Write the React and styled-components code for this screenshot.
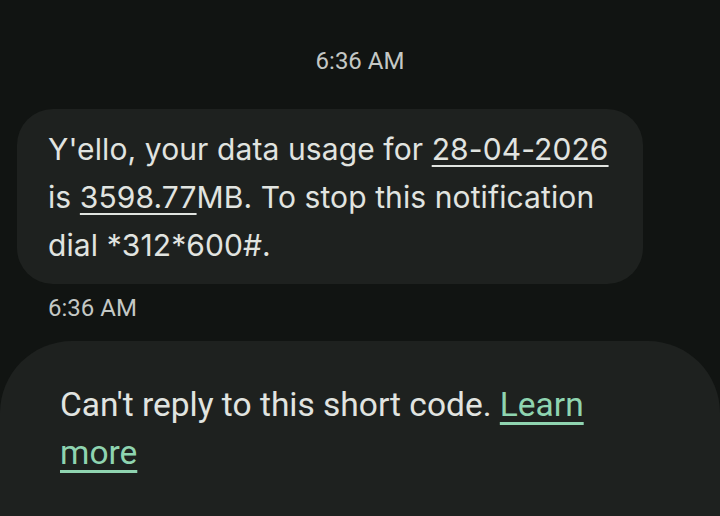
import React from "react";
import styled, { createGlobalStyle } from "styled-components";

const GlobalStyle = createGlobalStyle`
  html, body {
    margin: 0;
    padding: 0;
    background: #111412;
  }
  body {
    width: 720px;
    height: 516px;
    overflow: hidden;
  }
`;

export default function App() {
  return (
    <>
      <GlobalStyle />
      <Screen>
        <Thread>
          <DayStamp>6:36 AM</DayStamp>
          <Bubble>
            Y'ello, your data usage for <Link>28-04-2026</Link> is{" "}
            <Link>3598.77</Link>MB. To stop this notification dial *312*600#.
          </Bubble>
          <MsgTime>6:36 AM</MsgTime>
        </Thread>
        <Footer>
          <FooterText>
            Can't reply to this short code. <LearnMore href="#">Learn more</LearnMore>
          </FooterText>
        </Footer>
      </Screen>
    </>
  );
}

const Screen = styled.div`
  width: 720px;
  height: 516px;
  display: flex;
  flex-direction: column;
  overflow: hidden;
  background: #111412;
`;
const Thread = styled.div`
  display: flex;
  flex-direction: column;
  padding: 45px 17px 0;
`;
const DayStamp = styled.div`
  align-self: center;
  font-family: "Roboto", sans-serif;
  font-size: 24px;
  line-height: 32px;
  color: #c4c8c5;
`;
const Bubble = styled.div`
  margin-top: 32px;
  width: 626px;
  box-sizing: border-box;
  padding: 16px 26px 15px 31px;
  border-radius: 36px;
  background: #1e211f;
  font-family: "Inter", sans-serif;
  font-size: 30px;
  letter-spacing: 0.1px;
  line-height: 48px;
  color: #e1e4e0;
`;
const Link = styled.span`
  text-decoration: underline;
  text-decoration-thickness: 2px;
  text-underline-offset: 5px;
`;
const MsgTime = styled.div`
  margin-top: 8px;
  padding-left: 31px;
  font-family: "Roboto", sans-serif;
  font-size: 24px;
  line-height: 32px;
  color: #c4c8c5;
`;
const Footer = styled.div`
  margin-top: 17px;
  flex: 1;
  border-radius: 72px 72px 0 0;
  background: #1e211f;
  padding: 40px 60px 0;
`;
const FooterText = styled.p`
  margin: 0;
  width: 560px;
  font-family: "Roboto", sans-serif;
  font-size: 33.5px;
  line-height: 48px;
  color: #e1e4e0;
`;
const LearnMore = styled.a`
  color: #8fd4b0;
  text-decoration: underline;
  text-decoration-thickness: 3px;
  text-underline-offset: 6px;
`;
